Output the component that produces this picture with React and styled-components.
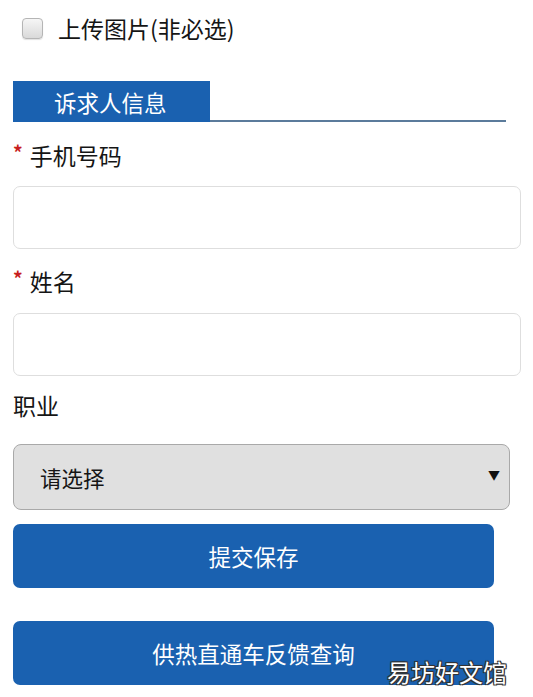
import React from "react";
import styled, { createGlobalStyle } from "styled-components";

const GlobalStyle = createGlobalStyle`
body {
    margin: 0;
    background: #fff;
    font-family: "Noto Sans CJK SC", "Noto Sans", sans-serif;
    color: #151515;
}
`

const Page = styled.div`
position: relative;
width: 533px;
height: 697px;
overflow: hidden;
padding-left: 13px;
box-sizing: border-box;
`

const CheckRow = styled.label`
display: flex;
align-items: center;
height: 32px;
margin-top: 12px;
padding-left: 9px;
font-size: 23px;
`

const Check = styled.input`
appearance: none;
width: 21px;
height: 21px;
margin: 0 15px 0 0;
border: 1px solid #b5b5b5;
border-radius: 4px;
background: linear-gradient(#f6f6f6, #d9d9d9);
box-shadow: 0 1px 1px rgba(0,0,0,0.12);
`

const TabBar = styled.div`
display: flex;
width: 493px;
margin-top: 37px;
`

const Tab = styled.div`
width: 197px;
height: 41px;
background: #1a61b0;
color: #fff;
font-size: 22.5px;
display: flex;
align-items: center;
padding-left: 41px;
box-sizing: border-box;
`

const TabLine = styled.div`
flex: 1;
border-bottom: 2px solid #5b7b9b;
`

const Label = styled.div`
display: flex;
align-items: center;
height: 32px;
margin-top: ${props => props.gap}px;
font-size: 23px;
`

const Star = styled.span`
color: #c81e1e;
font-size: 19px;
font-weight: 700;
margin: -7px 7px 0 0;
`

const Input = styled.input`
display: block;
width: 508px;
height: 63px;
margin-top: ${props => props.gap}px;
border: 1.5px solid #dedede;
border-radius: 7px;
background: #fff;
box-sizing: border-box;
font-size: 20px;
outline: none;
`

const SelectBox = styled.div`
display: flex;
align-items: center;
justify-content: space-between;
width: 497px;
height: 66px;
margin-top: 23px;
padding: 0 9px 0 26px;
box-sizing: border-box;
background: #e0e0e0;
border: 1.5px solid #a9a9a9;
border-radius: 8px;
font-size: 21.5px;
color: #151515;
`

const Arrow = styled.span`
font-size: 12px;
color: #111;
margin-top: -6px;
`

const Button = styled.button`
display: block;
width: 481px;
height: 64px;
margin-top: ${props => props.gap}px;
border: none;
border-radius: 7px;
background: #1a61b0;
color: #fff;
font-family: "Noto Sans CJK SC", "Noto Sans", sans-serif;
font-size: 22.5px;
padding: 0;
`

const Watermark = styled.div`
position: absolute;
left: 387px;
top: 654px;
font-size: 24px;
color: #fff;
text-shadow: -1px -1px 0 #333, 1px -1px 0 #333, -1px 1px 0 #333, 1px 1px 0 #333, 0 0 2px #000;
`

const App = () => {
    return (
        <Page>
            <GlobalStyle />
            <CheckRow>
                <Check type="checkbox" />
                上传图片(非必选)
            </CheckRow>

            <TabBar>
                <Tab>诉求人信息</Tab>
                <TabLine />
            </TabBar>

            <Label gap={17}><Star>*</Star>手机号码</Label>
            <Input gap={15} />

            <Label gap={16}><Star>*</Star>姓名</Label>
            <Input gap={16} />

            <Label gap={13}>职业</Label>
            <SelectBox>
                <span>请选择</span>
                <Arrow>▼</Arrow>
            </SelectBox>

            <Button gap={14}>提交保存</Button>
            <Button gap={33}>供热直通车反馈查询</Button>

            <Watermark>易坊好文馆</Watermark>
        </Page>
    )
}

export default App;
